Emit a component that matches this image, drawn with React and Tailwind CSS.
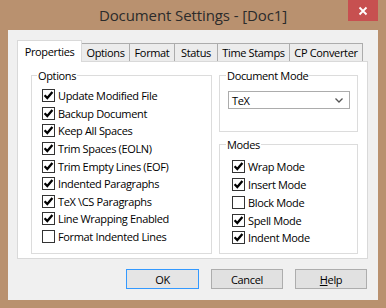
import React from "react";

function Check({ checked }) {
  return (
    <span className="w-[13px] h-[13px] border border-[#333333] bg-white flex items-center justify-center shrink-0">
      {checked && (
        <svg width="11" height="11" viewBox="0 0 11 11">
          <path d="M1.6 5.3 L4.3 8.1 L9.4 2" fill="none" stroke="#000" strokeWidth="2.3" />
        </svg>
      )}
    </span>
  );
}

function Row({ label, checked, h }) {
  return (
    <div className={`flex items-center gap-[3px] ${h}`}>
      <Check checked={checked} />
      <span className="whitespace-nowrap">{label}</span>
    </div>
  );
}

const options = [
  ["Update Modified File", true],
  ["Backup Document", true],
  ["Keep All Spaces", true],
  ["Trim Spaces (EOLN)", true],
  ["Trim Empty Lines (EOF)", true],
  ["Indented Paragraphs", true],
  ["TeX \\CS Paragraphs", true],
  ["Line Wrapping Enabled", true],
  ["Format Indented Lines", false],
];

const modes = [
  ["Wrap Mode", true],
  ["Insert Mode", true],
  ["Block Mode", false],
  ["Spell Mode", true],
  ["Indent Mode", true],
];

const tabs = [
  ["Options", "w-[49px]"],
  ["Format", "w-[46px]"],
  ["Status", "w-[44px]"],
  ["Time Stamps", "w-[73px]"],
  ["CP Converter", "w-[74px]"],
];

export default function App() {
  return (
    <div className="w-[386px] h-[308px] bg-[#b9916f] flex flex-col font-[family-name:Open_Sans,sans-serif] text-[11px] tracking-[-0.35px] leading-[15px] text-black">
      <div className="h-[30px] relative flex items-center justify-center shrink-0">
        <span className="text-[15px] tracking-[-0.1px] text-[#2b2b2b] pt-[1px]">Document Settings - [Doc1]</span>
        <div className="absolute right-[8px] top-0 w-[30px] h-[21px] bg-[#c75050] flex items-center justify-center">
          <svg width="10" height="10" viewBox="0 0 10 10">
            <path d="M1.5 1.5 L8.5 8.5 M8.5 1.5 L1.5 8.5" stroke="#fff" strokeWidth="1.8" />
          </svg>
        </div>
      </div>
      <div className="mx-[8px] h-[270px] bg-[#f0f0f0] pt-[10px] pl-[9px] flex flex-col">
        <div className="flex items-end h-[21px]">
          <div className="w-[65px] h-[22px] border border-b-0 border-[#d9d9d9] bg-white relative z-10 mb-[-1px] flex items-center justify-center whitespace-nowrap pb-[1px]">
            Properties
          </div>
          {tabs.map(([t, w]) => (
            <div
              key={t}
              className={`${w} -ml-[1px] h-[18px] border border-b-0 border-[#acacac] bg-[#ececec] flex items-center justify-center whitespace-nowrap first:ml-0`}
            >
              {t}
            </div>
          ))}
        </div>
        <div className="w-[351px] h-[198px] border border-[#d9d9d9] bg-white flex gap-[7px] pl-[13px] pt-[6px]">
          <fieldset className="w-[181px] h-[186px] border border-[#dcdcdc]">
            <legend className="ml-[5px] px-[1px]">Options</legend>
            <div className="pl-[10px] pt-[4px]">
              {options.map(([l, c]) => (
                <Row key={l} label={l} checked={c} h="h-[17.6px]" />
              ))}
            </div>
          </fieldset>
          <div className="flex flex-col gap-[5px]">
            <fieldset className="w-[139px] h-[64px] border border-[#dcdcdc]">
              <legend className="ml-[6px] px-[1px]">Document Mode</legend>
              <div className="pl-[8px] pt-[8px]">
                <div className="w-[122px] h-[18px] border border-[#acacac] bg-white flex items-center justify-between pl-[3px] pr-[6px]">
                  <span>TeX</span>
                  <svg width="8" height="5" viewBox="0 0 8 5">
                    <path d="M0.5 0.5 L4 4 L7.5 0.5" fill="none" stroke="#555" strokeWidth="1.3" />
                  </svg>
                </div>
              </div>
            </fieldset>
            <fieldset className="w-[139px] h-[117px] border border-[#dcdcdc]">
              <legend className="ml-[6px] px-[1px]">Modes</legend>
              <div className="pl-[12px] pt-[6px]">
                {modes.map(([l, c]) => (
                  <Row key={l} label={l} checked={c} h="h-[17.75px]" />
                ))}
              </div>
            </fieldset>
          </div>
        </div>
        <div className="w-[351px] flex justify-end gap-[12px] pr-[1px] mt-[10px]">
          <button className="w-[73px] h-[20px] border border-[#3399ff] bg-[#e5e5e5] flex items-center justify-center">OK</button>
          <button className="w-[72px] h-[20px] border border-[#adadad] bg-[#e1e1e1] flex items-center justify-center">Cancel</button>
          <button className="w-[72px] h-[20px] border border-[#adadad] bg-[#e1e1e1] flex items-center justify-center">
            <span><span className="underline">H</span>elp</span>
          </button>
        </div>
      </div>
    </div>
  );
}
